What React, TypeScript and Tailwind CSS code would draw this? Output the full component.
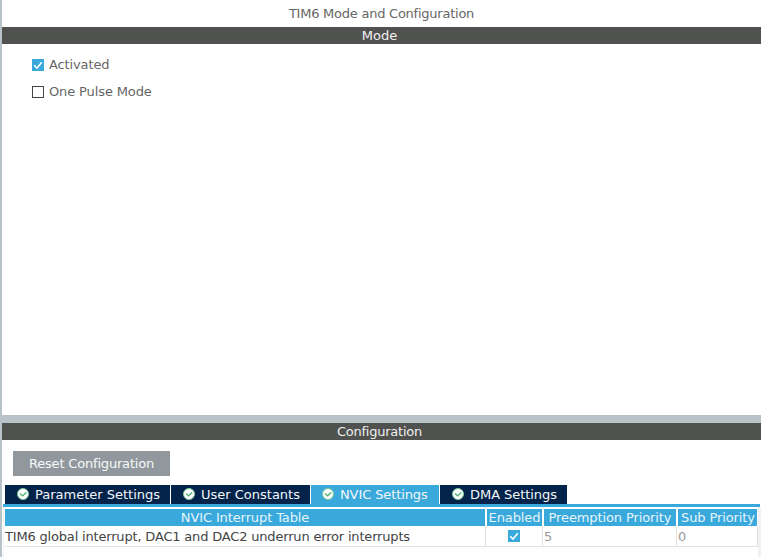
import type { ReactNode } from "react";

function CheckBox({ checked }: { checked: boolean }) {
  return checked ? (
    <span className="block h-3 w-3 shrink-0 bg-[#39a9dc]">
      <svg viewBox="0 0 12 12" className="block h-3 w-3" fill="none" stroke="#fff" strokeWidth="1.6">
        <path d="M2.2 6.2 L5 9 L9.8 3.2" />
      </svg>
    </span>
  ) : (
    <span className="block h-3 w-3 shrink-0 border border-[#464646] bg-white" />
  );
}

function StatusIcon() {
  return (
    <svg viewBox="0 0 12 12" className="mb-px block h-3 w-3 shrink-0" fill="none">
      <circle cx="6" cy="6" r="5.5" fill="#fff" stroke="#7cc79b" strokeWidth="1" />
      <path d="M3 5.4 L5.6 7.9 L9.2 4.4" stroke="#4db076" strokeWidth="1.4" />
    </svg>
  );
}

function Bar({ children }: { children: ReactNode }) {
  return (
    <div className="flex h-[17px] shrink-0 justify-center bg-[#505250] pr-1 leading-[17px] text-[#f0f0f0]">
      {children}
    </div>
  );
}

const tabs = [
  { label: "Parameter Settings", box: "w-[165px] pl-3 bg-[#03234b]" },
  { label: "User Constants", box: "w-[139px] pl-3 bg-[#03234b]" },
  { label: "NVIC Settings", box: "w-[128px] pl-[11px] bg-[#39a9dc] tracking-[-0.1px]" },
  { label: "DMA Settings", box: "w-[127px] pl-3 bg-[#03234b] tracking-[-0.05px]" },
];

export default function App() {
  return (
    <div className="flex h-[557px] w-[761px] flex-col overflow-hidden whitespace-nowrap border-l-2 border-[#b7c3c9] bg-white font-['DejaVu_Sans',sans-serif] text-[13px] text-[#666666]">
      <h1 className="h-[27px] shrink-0 text-center leading-[27px] tracking-[-0.24px]">TIM6 Mode and Configuration</h1>
      <Bar>Mode</Bar>
      <div className="flex h-[371px] shrink-0 flex-col gap-[11px] pl-[30px] pt-[13px] tracking-[-0.12px]">
        <label className="flex h-4 items-center gap-[5px]">
          <CheckBox checked />
          <span>Activated</span>
        </label>
        <label className="flex h-4 items-center gap-[5px]">
          <CheckBox checked={false} />
          <span>One Pulse Mode</span>
        </label>
      </div>
      <div className="h-2 shrink-0 bg-[#b7c3c9]" />
      <Bar>
        <span className="tracking-[-0.24px]">Configuration</span>
      </Bar>
      <div className="shrink-0 pb-[9px] pl-[11px] pt-[11px]">
        <button className="block h-[25px] w-[157px] bg-[#90989e] text-center leading-[25px] tracking-[-0.18px] text-[#f7f8f8]">
          Reset Configuration
        </button>
      </div>
      <div className="flex h-[19px] shrink-0 gap-px pl-[3px]">
        {tabs.map((t) => (
          <div key={t.label} className={`flex items-center gap-[6px] leading-[19px] text-[#f4f6f8] ${t.box}`}>
            <StatusIcon />
            <span>{t.label}</span>
          </div>
        ))}
      </div>
      <div className="ml-px mr-px h-[3px] shrink-0 bg-[#39a9dc]" />
      <div className="ml-px flex grow justify-between border-l border-[#f0f1f4]">
        <div className="w-[755px] pl-px pt-[2px]">
          <div className="grid h-[17px] grid-cols-[480px_55px_132px_79px] gap-x-[2px] text-center leading-[17px] tracking-[-0.11px] text-[#e6f4fb]">
            <div className="bg-[#39a9dc]">NVIC Interrupt Table</div>
            <div className="bg-[#39a9dc]">Enabled</div>
            <div className="bg-[#39a9dc]">Preemption Priority</div>
            <div className="bg-[#39a9dc] pl-px">Sub Priority</div>
          </div>
          <div className="grid h-[21px] w-[753px] grid-cols-[481px_57px_134px_81px] border-b border-[#e1e1e1] leading-[21px] text-[#9b9b9b]">
            <div className="h-5 border-r border-[#e1e1e1] tracking-[-0.18px] text-[#444444]">
              TIM6 global interrupt, DAC1 and DAC2 underrun error interrupts
            </div>
            <div className="flex h-5 items-center justify-center border-r border-[#e1e1e1]">
              <CheckBox checked />
            </div>
            <div className="h-5 border-r border-[#e1e1e1] pl-px">5</div>
            <div className="h-5 border-r border-[#e1e1e1] pl-px">0</div>
          </div>
        </div>
        <div className="w-[3px] bg-[#f0f1f4]" />
      </div>
    </div>
  );
}
